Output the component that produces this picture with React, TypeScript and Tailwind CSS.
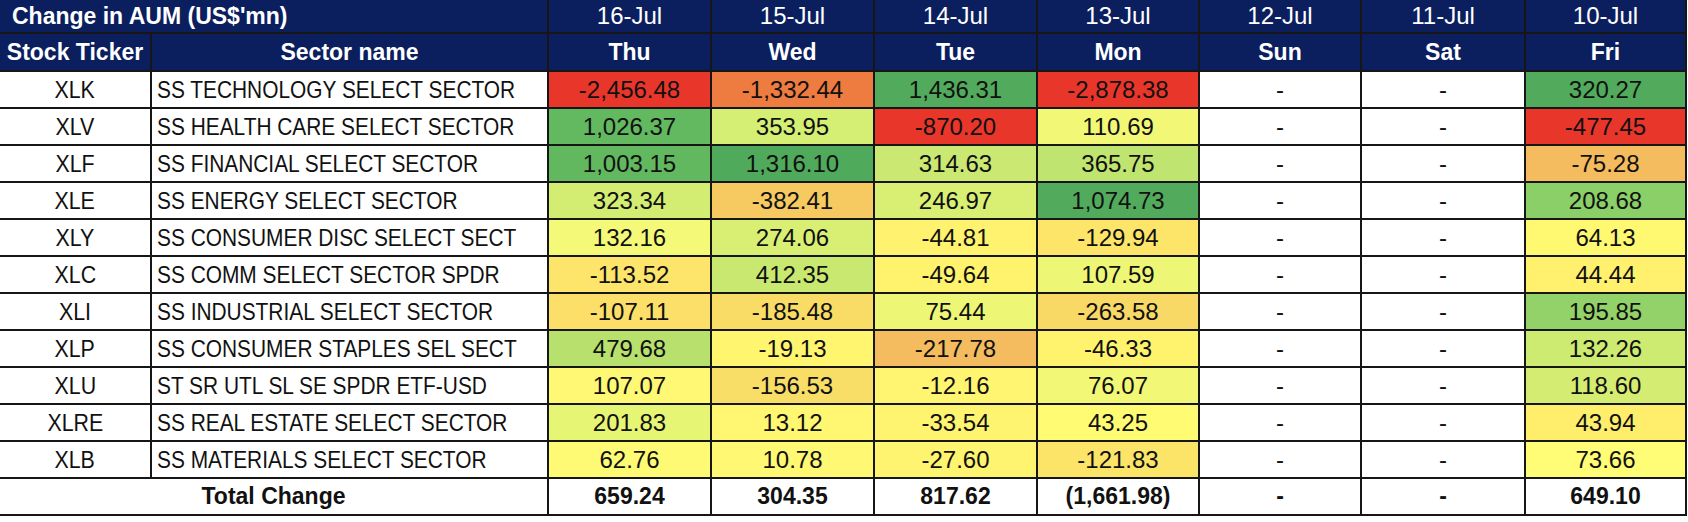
const days = [
  { date: "16-Jul", day: "Thu" },
  { date: "15-Jul", day: "Wed" },
  { date: "14-Jul", day: "Tue" },
  { date: "13-Jul", day: "Mon" },
  { date: "12-Jul", day: "Sun" },
  { date: "11-Jul", day: "Sat" },
  { date: "10-Jul", day: "Fri" },
]

type Cell = [string, string]

interface Row {
  ticker: string
  sector: string
  cells: Cell[]
}

const W: Cell = ["-", "#ffffff"]

const rows: Row[] = [
  {
    ticker: "XLK",
    sector: "SS TECHNOLOGY SELECT SECTOR",
    cells: [["-2,456.48", "#e9362a"], ["-1,332.44", "#ee7b3f"], ["1,436.31", "#52ab5c"], ["-2,878.38", "#e9362a"], W, W, ["320.27", "#52ab5c"]],
  },
  {
    ticker: "XLV",
    sector: "SS HEALTH CARE SELECT SECTOR",
    cells: [["1,026.37", "#62b95f"], ["353.95", "#d5ee74"], ["-870.20", "#e9362a"], ["110.69", "#f2f875"], W, W, ["-477.45", "#e9362a"]],
  },
  {
    ticker: "XLF",
    sector: "SS FINANCIAL SELECT SECTOR",
    cells: [["1,003.15", "#62b85f"], ["1,316.10", "#4faa5b"], ["314.63", "#cbe972"], ["365.75", "#bfe46f"], W, W, ["-75.28", "#f4bc5e"]],
  },
  {
    ticker: "XLE",
    sector: "SS ENERGY SELECT SECTOR",
    cells: [["323.34", "#d3ed73"], ["-382.41", "#f6c961"], ["246.97", "#d9ef74"], ["1,074.73", "#52ab5c"], W, W, ["208.68", "#8acf67"]],
  },
  {
    ticker: "XLY",
    sector: "SS CONSUMER DISC SELECT SECT",
    cells: [["132.16", "#f4fa77"], ["274.06", "#d8ef74"], ["-44.81", "#fef26e"], ["-129.94", "#fde56a"], W, W, ["64.13", "#fff972"]],
  },
  {
    ticker: "XLC",
    sector: "SS COMM SELECT SECTOR SPDR",
    cells: [["-113.52", "#fde46a"], ["412.35", "#c9e870"], ["-49.64", "#fff36d"], ["107.59", "#eef775"], W, W, ["44.44", "#fff06d"]],
  },
  {
    ticker: "XLI",
    sector: "SS INDUSTRIAL SELECT SECTOR",
    cells: [["-107.11", "#fbdf68"], ["-185.48", "#f8dc66"], ["75.44", "#edf775"], ["-263.58", "#f8d966"], W, W, ["195.85", "#93d268"]],
  },
  {
    ticker: "XLP",
    sector: "SS CONSUMER STAPLES SEL SECT",
    cells: [["479.68", "#b7e06d"], ["-19.13", "#fff56f"], ["-217.78", "#f4bc5e"], ["-46.33", "#fff36e"], W, W, ["132.26", "#cdea71"]],
  },
  {
    ticker: "XLU",
    sector: "ST SR UTL SL SE SPDR ETF-USD",
    cells: [["107.07", "#fef874"], ["-156.53", "#f8dd67"], ["-12.16", "#fff570"], ["76.07", "#f2f876"], W, W, ["118.60", "#d4ec72"]],
  },
  {
    ticker: "XLRE",
    sector: "SS REAL ESTATE SELECT SECTOR",
    cells: [["201.83", "#e7f574"], ["13.12", "#fff772"], ["-33.54", "#fff46f"], ["43.25", "#fffc74"], W, W, ["43.94", "#feee6c"]],
  },
  {
    ticker: "XLB",
    sector: "SS MATERIALS SELECT SECTOR",
    cells: [["62.76", "#fffa74"], ["10.78", "#fff872"], ["-27.60", "#fff46f"], ["-121.83", "#fce469"], W, W, ["73.66", "#fffc75"]],
  },
]

const totals = ["659.24", "304.35", "817.62", "(1,661.98)", "-", "-", "649.10"]

const colWidths = [151, 397, 163, 163, 163, 162, 162, 164, 161]

export default function App() {
  return (
    <div className="w-[1688px] h-[522px] bg-white overflow-hidden">
      <table className="table-fixed border-collapse w-[1686px] font-['Liberation_Sans',Arial,sans-serif]">
        <colgroup>
          {colWidths.map((w, i) => (
            <col key={i} style={{ width: w }} />
          ))}
        </colgroup>
        <thead>
          {/* Title row with dates */}
          <tr className="h-[33px] bg-[#0b1f5e] text-white">
            <th colSpan={2} className="border-2 border-l-0 border-t-0 border-[#161616] pl-3 text-left text-[23px] font-bold leading-none">
              Change in AUM (US$'mn)
            </th>
            {days.map((d) => (
              <th key={d.date} className="border-2 border-t-0 border-[#161616] text-center text-[24px] font-normal leading-none">
                {d.date}
              </th>
            ))}
          </tr>
          {/* Column names and weekdays */}
          <tr className="h-[38px] bg-[#0b1f5e] text-white">
            <th className="border-2 border-l-0 border-[#161616] text-center text-[23px] font-bold leading-none whitespace-nowrap">
              Stock Ticker
            </th>
            <th className="border-2 border-[#161616] text-center text-[23px] font-bold leading-none">
              Sector name
            </th>
            {days.map((d) => (
              <th key={d.day} className="border-2 border-[#161616] text-center text-[23px] font-bold leading-none">
                {d.day}
              </th>
            ))}
          </tr>
        </thead>
        <tbody>
          {rows.map((r) => (
            <tr key={r.ticker} className="h-[37px]">
              <td className="border-2 border-l-0 border-[#161616] text-center text-[24px] leading-none text-[#111]">
                <span className="inline-block scale-x-[0.89]">{r.ticker}</span>
              </td>
              <td className="border-2 border-[#161616] pl-[5px] text-left text-[24px] leading-none whitespace-nowrap text-[#111] overflow-hidden">
                <span className="inline-block origin-left scale-x-[0.87]">{r.sector}</span>
              </td>
              {r.cells.map(([v, bg], i) => (
                <td
                  key={i}
                  className="border-2 border-[#161616] text-center text-[24px] leading-none text-[#111]"
                  style={{ backgroundColor: bg }}
                >
                  {v}
                </td>
              ))}
            </tr>
          ))}
          <tr className="h-[37px]">
            <td colSpan={2} className="border-2 border-l-0 border-[#161616] text-center text-[23px] font-bold leading-none text-[#111]">
              Total Change
            </td>
            {totals.map((t, i) => (
              <td key={i} className="border-2 border-[#161616] text-center text-[23px] font-bold leading-none text-[#111]">
                {t}
              </td>
            ))}
          </tr>
        </tbody>
      </table>
    </div>
  )
}
